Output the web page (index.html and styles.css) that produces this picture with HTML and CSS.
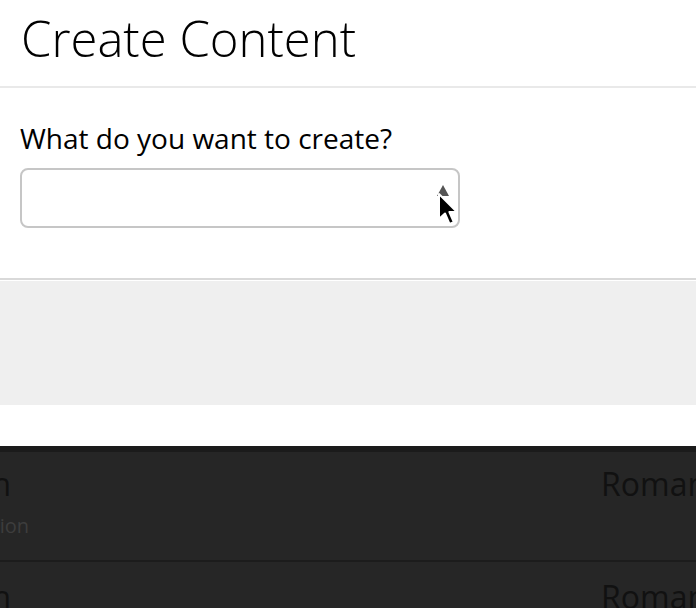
FILE: index.html
```html
<!DOCTYPE html>
<html lang="en">
<head>
  <meta charset="UTF-8">
  <meta name="viewport" content="width=device-width, initial-scale=1.0">
  <title>Create Content</title>
  <link rel="stylesheet" href="styles.css">
</head>
<body>
  <div class="modal">
    <div class="modal-header">
      <h1>Create Content</h1>
    </div>

    <div class="modal-body">
      <label class="field-label" for="contentType">What do you want to create?</label>
      <div class="select-box" id="contentType">
        <span class="select-arrow"></span>
        <svg class="cursor" width="24" height="36" viewBox="0 0 24 36">
          <path d="M2 2 L2 27 L8 21.5 L12.5 32 L16.8 30.2 L12.4 20 L20 20 Z" fill="#000" stroke="#fff" stroke-width="2" stroke-linejoin="round"/>
        </svg>
      </div>
    </div>

    <div class="modal-footer"></div>
    <div class="modal-spacer"></div>
  </div>

  <div class="page-behind">
    <div class="list-row">
      <div class="cell-left">
        <span class="clip clip-title"><span class="item-title">Kitchen</span></span>
        <span class="clip clip-sub"><span class="item-sub">Section</span></span>
      </div>
      <div class="cell-right">Romano</div>
    </div>
    <div class="list-row">
      <div class="cell-left">
        <span class="clip clip-title"><span class="item-title">Garden</span></span>
        <span class="clip clip-sub"><span class="item-sub">Location</span></span>
      </div>
      <div class="cell-right">Romano</div>
    </div>
  </div>
</body>
</html>
```

FILE: styles.css
```css
html, body {
  margin: 0;
  padding: 0;
}

body {
  font-family: 'Open Sans', 'Noto Sans', sans-serif;
  background: #262626;
  color: #000;
  height: 608px;
  overflow: hidden;
}

.modal {
  background: #fff;
}

.modal-header {
  height: 86px;
  border-bottom: 2px solid #e9e9e9;
  padding: 0 21px;
}

.modal-header h1 {
  margin: 0;
  font-size: 49px;
  font-weight: 300;
  line-height: 76px;
}

.modal-body {
  padding: 0 20px;
  border-bottom: 2px solid #d9d9d9;
  box-sizing: border-box;
  height: 192px;
}

.field-label {
  display: block;
  padding-top: 28px;
  font-size: 28px;
  line-height: 44px;
  color: #000;
}

.select-box {
  position: relative;
  margin-top: 8px;
  width: 440px;
  height: 60px;
  box-sizing: border-box;
  border: 2px solid #c6c6c6;
  border-radius: 8px;
  background: #fff;
}

.select-arrow {
  position: absolute;
  right: 9px;
  top: 15px;
  width: 0;
  height: 0;
  border-left: 6px solid transparent;
  border-right: 6px solid transparent;
  border-bottom: 11px solid #555;
}

.cursor {
  position: absolute;
  left: 415px;
  top: 22px;
}

.modal-footer {
  margin-top: 1px;
  height: 124px;
  background: #efefef;
}

.modal-spacer {
  height: 41px;
}

.page-behind {
  border-top: 6px solid #1b1b1b;
  background: #262626;
}

.list-row {
  display: flex;
  justify-content: space-between;
  height: 108px;
  border-bottom: 2px solid #1c1c1c;
}

.list-row + .list-row .item-title,
.list-row + .list-row .cell-right {
  margin-top: 17px;
}

.cell-left {
  display: flex;
  flex-direction: column;
}

.clip {
  display: flex;
  justify-content: flex-end;
  overflow: hidden;
  white-space: nowrap;
}

.clip-title {
  width: 11px;
}

.clip-sub {
  width: 29px;
}

.item-title {
  font-size: 32px;
  line-height: 36px;
  margin-top: 14px;
  color: #111;
}

.item-sub {
  font-size: 20px;
  line-height: 28px;
  margin-top: 10px;
  color: #3d3d3d;
}

.cell-right {
  width: 95px;
  overflow: hidden;
  white-space: nowrap;
  font-size: 32px;
  line-height: 36px;
  margin-top: 14px;
  color: #111;
}
```
